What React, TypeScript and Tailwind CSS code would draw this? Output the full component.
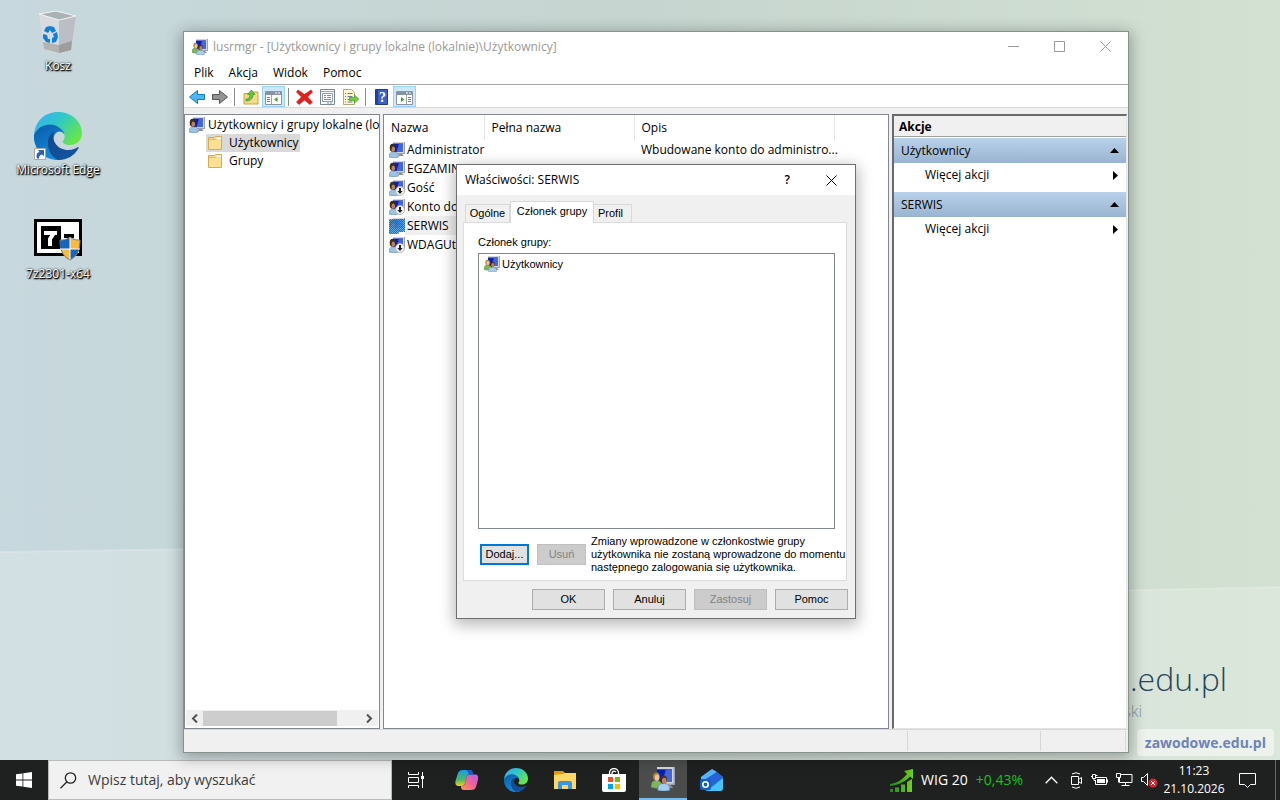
import type { ReactNode } from "react";

const toolbarSep = <span className="mr-1 ml-[3px] h-[18px] w-px bg-[#8d8d8d]" />;

const BlueScreen = () => (
  <>
    <path d="M4 0h12v12H4z" fill="#d3d6dc" />
    <path d="M15 0h1v12H4v-1h11z" fill="#9ba1ad" />
    <path d="M4 1.500h10V10H4z" fill="#0c1fae" />
    <path d="M10 1.500h4V10H7.500z" fill="#4467d6" />
    <path d="M10 12h3l2 2H9z" fill="#8b919b" />
  </>
);

const UserIcon = ({ disabled, selected }: { disabled?: boolean; selected?: boolean }) => (
  <svg width="16" height="16" viewBox="0 0 16 16" className="shrink-0">
    {selected && (
      <defs>
        <pattern id="dither" width="2" height="2" patternUnits="userSpaceOnUse">
          <path d="M0 0h1v1H0zM1 1h1v1H1z" fill="#0078d7" />
        </pattern>
      </defs>
    )}
    <BlueScreen />
    <path d="M0 15c0-4 1.500-5 4.500-5S9.500 11 9.500 15q-5 1.800-9.500 0z" fill="#9cc3e6" stroke="#5b7fa6" strokeWidth=".5" />
    <ellipse cx="3.600" cy="5.800" rx="2.900" ry="4" fill="#3d2c22" />
    <ellipse cx="4.300" cy="7.200" rx="1.800" ry="2.600" fill="#b98458" />
    {disabled && (
      <>
        <circle cx="11" cy="11" r="4.500" fill="#f4f4f4" stroke="#b3b3b3" />
        <path d="M10 8h2v3h1.700L11 14l-2.700-3H10z" fill="#222" />
      </>
    )}
    {selected && (
      <>
        <path d="M0 1h16v12H9.500v2.500H0z" fill="#4aa4ec" opacity=".7" />
        <path d="M0 1h16v13H9.500v2H0z" fill="url(#dither)" />
      </>
    )}
  </svg>
);

const GroupIcon = ({ size = 16 }: { size?: number }) => (
  <svg width={size} height={size} viewBox="0 0 16 16" className="shrink-0">
    <BlueScreen />
    <path d="M0 13.500c0-3.500 1.200-4.500 3.500-4.500S7.500 10 7.500 13.500q-4 1.400-7.500 0z" fill="#7db45e" stroke="#55863f" strokeWidth=".4" />
    <ellipse cx="3.600" cy="6.400" rx="2.200" ry="2.700" fill="#a98338" />
    <ellipse cx="4" cy="7.100" rx="1.500" ry="2.100" fill="#efc49a" />
    <path d="M4.500 15.500c0-3.500 1.500-4.500 4-4.500s4 1 4 4.500q-4 1.200-8 0z" fill="#a6cdf0" stroke="#6289b0" strokeWidth=".4" />
    <ellipse cx="8.400" cy="8.400" rx="2.200" ry="2.800" fill="#4b3022" />
    <ellipse cx="8.800" cy="9.200" rx="1.500" ry="2.100" fill="#b98458" />
  </svg>
);

const FolderIcon = () => (
  <svg width="16" height="16" viewBox="0 0 16 16" className="shrink-0">
    <path d="M1.500 2.500h6l1-1h6v13h-13z" fill="#f7d98a" stroke="#d8ab4c" />
    <path d="M9 2.500h5v1.500H9z" fill="#fff" />
    <path d="M2 4.500h12v9.500H2z" fill="#fbdf93" />
    <path d="M2 4.500h6.500l1-1" stroke="#e4bb55" fill="none" />
  </svg>
);

const ArrowIcon = ({ forward }: { forward?: boolean }) => (
  <svg width="16" height="16" viewBox="0 0 16 16">
    {forward ? (
      <path d="M.5 5.500h7v-4l8 6.500-8 6.500v-4h-7z" fill="#939393" stroke="#555" />
    ) : (
      <path d="M15.500 5.500h-7v-4L.5 8l8 6.500v-4h7z" fill="#49b8f0" stroke="#1778bd" />
    )}
  </svg>
);

const UpFolderIcon = () => (
  <svg width="16" height="16" viewBox="0 0 16 16">
    <path d="M1 4.500h6l1-1.500h7v12H1z" fill="#f7d98a" stroke="#cda343" />
    <path d="M3 10C6 10 7 8 7 5.500H4.500L8.500 1l3.500 4.500h-2C10 9 8 12 3 12z" fill="#63c83b" stroke="#3a8f24" strokeWidth=".7" />
  </svg>
);

const PaneIcon = ({ right }: { right?: boolean }) => (
  <svg width="17" height="16" viewBox="0 0 17 16">
    <path d="M.5 2.500h16v13H.5z" fill="#fdfdfd" stroke="#8b949f" />
    <path d="M1 3h15v3H1z" fill="#8593a5" />
    <path d="M10 4h2M13 4h2" stroke="#fff" />
    {right ? (
      <>
        <path d="M10.500 6v9" stroke="#9ba4af" />
        <path d="M12 8.500h3M12 10.500h3M12 12.500h3" stroke="#4787cc" />
        <path d="M5 8v5l3.500-2.500z" fill="#43a72d" />
      </>
    ) : (
      <>
        <path d="M6.500 6v9" stroke="#9ba4af" />
        <path d="M2 8.500h3M2 10.500h3M2 12.500h3" stroke="#4787cc" />
        <path d="M12.500 8v5L9 10.500z" fill="#43a72d" />
      </>
    )}
  </svg>
);

const DeleteIcon = () => (
  <svg width="17" height="16" viewBox="0 0 17 16">
    <path d="M2 1l6.500 4.500L15 1l1.500 2-5 5 5 5-2.500 2.500-5.500-4.500L3 15.500.5 13l5-5-5-5z" fill="#e3201b" stroke="#b3120f" strokeWidth=".6" />
  </svg>
);

const PropertiesIcon = () => (
  <svg width="16" height="16" viewBox="0 0 16 16">
    <path d="M.5.5h14v15H.5z" fill="#f5f8fb" stroke="#7d8894" />
    <path d="M1 2.500h13" stroke="#9fa9b5" />
    <path d="M2.500 4.500h10v8h-10z" fill="#fff" stroke="#8d9db3" />
    <path d="M4 6.500h2M4 8.500h2M7 6.500h4M7 8.500h4M4 10.500h7M7 14h2M10 14h2" stroke="#5e94c9" />
  </svg>
);

const ExportIcon = () => (
  <svg width="16" height="16" viewBox="0 0 16 16">
    <path d="M.5.5h8l3 3v12H.5z" fill="#fdf6d5" stroke="#b5a777" />
    <path d="M2 4.500h1M4.500 4.500h5M2 7.500h1M4.500 7.500h5M2 10.500h1M4.500 10.500h3M2 13h1M4.500 13h5" stroke="#6d7d97" />
    <path d="M6.500 8.500h5V6l4.300 4-4.300 4v-2.500h-5z" fill="#6fd23e" stroke="#3f9722" strokeWidth=".7" />
  </svg>
);

const HelpIcon = () => (
  <svg width="13" height="16" viewBox="0 0 13 16">
    <path d="M.5.5h12v15H.5z" fill="#3c5fc9" stroke="#24398c" />
    <path d="M1 1h2v14H1z" fill="#2541a0" />
    <text x="7.500" y="13" fontSize="14" fontWeight="bold" textAnchor="middle" fill="#fff" fontFamily="Liberation Serif">?</text>
  </svg>
);

const EdgeLogo = ({ size, id }: { size: number; id: string }) => (
  <svg width={size} height={size} viewBox="0 0 48 48">
    <defs>
      <linearGradient id={`${id}-top`} x1="0" y1="0" x2="1" y2=".6">
        <stop offset=".1" stopColor="#37b0f2" />
        <stop offset=".5" stopColor="#2fc8c8" />
        <stop offset="1" stopColor="#66e64a" />
      </linearGradient>
      <linearGradient id={`${id}-mid`} x1="0" y1="0" x2=".6" y2="1">
        <stop offset="0" stopColor="#0a5aa8" />
        <stop offset="1" stopColor="#1290e0" />
      </linearGradient>
      <linearGradient id={`${id}-low`} x1="0" y1="0" x2="1" y2="1">
        <stop offset="0" stopColor="#0d4a8c" />
        <stop offset="1" stopColor="#1554a4" />
      </linearGradient>
    </defs>
    <path d="M0 23C1 9 11 0 24 0c14 0 24 10 24 21 0 8-6 12-12 12-5 0-8-2-7-4 2-2 2-5 1-7C27 13 12 8 0 23z" fill={`url(#${id}-top)`} />
    <path d="M0 23C4 14 13 11 20 13c6 2 10 6 10 9-3-4-8-3-10 2-4 10 3 20 14 21-3 2-7 3-10 3C10 48-1 37 0 23z" fill={`url(#${id}-mid)`} />
    <path d="M14 28c1-4 3-7 6-8-3 9 4 18 14 18 5 0 8-2 10-3 1 0 1 1 0 2-4 7-11 11-20 11-7-3-11-12-10-20z" fill={`url(#${id}-low)`} />
  </svg>
);

const RecycleBin = () => (
  <svg width="40" height="44" viewBox="0 0 40 44">
    <path d="M1 4l20 6 17-4-5 34-12 3-15-4z" fill="#d8dcde" />
    <path d="M21 10l17-4-5 34-12 3z" fill="#b9bfc4" />
    <path d="M1 4L18 1l20 5-17 4z" fill="#a9b2b5" stroke="#f2f4f5" />
    <path d="M5 32l16 3v8L6 39z" fill="#b5b2b0" />
    <path d="M21 35l13-4-1 9-12 3z" fill="#9e9d9d" />
    <g fill="#0f80d8">
      <path d="M8 17l4-1 4 1 2 4-4 2-2-3-2 3-4-2zM5 24l4 1 1 4h2v4l-4-1-3-4zM19 22l1 5-2 5-4 1v-5l2-1-1-3z" />
    </g>
  </svg>
);

const SevenZip = () => (
  <svg width="48" height="42" viewBox="0 0 48 42">
    <path d="M0 0h48v37H0z" fill="#000" />
    <path d="M3 3h42v31H3z" fill="#fff" />
    <path d="M7 7h20v23H7z" fill="#000" />
    <path d="M10 14h13M20 14l-4 6v7" stroke="#fff" strokeWidth="4" fill="none" />
    <path d="M30 17h10" stroke="#000" strokeWidth="4" />
    <path d="M36 18c4 3 7 3 10 3 0 9-2 16-10 20-8-4-10-11-10-20 3 0 6 0 10-3z" fill="#f7b93e" stroke="#6d7a88" />
    <path d="M36 18.500V30H26.500q-.5-4-.5-8.500c4 0 7-1 10-3zM36 30h9q-2 7-9 10.500z" fill="#1565c0" />
    <path d="M36 18.500v22M26 30h20" stroke="#fff" />
  </svg>
);

const WindowsLogo = () => (
  <svg width="16" height="16" viewBox="0 0 16 16" fill="#fff">
    <path d="M0 2.300l6.500-.9v6.200H0zM7.300 1.300L16 0v7.600H7.300zM0 8.400h6.500v6.200L0 13.700zM7.300 8.400H16V16l-8.700-1.300z" />
  </svg>
);

const TaskViewIcon = () => (
  <svg width="18" height="16" viewBox="0 0 18 16" fill="none" stroke="#fff">
    <path d="M1.500 0v2.500h10V0M1.500 5.500h10v5h-10zM1.500 16v-2.500h10V16M15.500 0v16" />
    <path d="M14 4h3v3h-3z" fill="#fff" stroke="none" />
  </svg>
);

const CopilotIcon = () => (
  <svg width="24" height="24" viewBox="0 0 24 24">
    <defs>
      <linearGradient id="cop-a" x1="0" y1="0" x2="0" y2="1">
        <stop offset="0" stopColor="#189fe8" />
        <stop offset=".6" stopColor="#48b86a" />
        <stop offset="1" stopColor="#f2cf1f" />
      </linearGradient>
      <linearGradient id="cop-b" x1="1" y1="0" x2="0" y2="1">
        <stop offset="0" stopColor="#b45cf0" />
        <stop offset=".5" stopColor="#f0629a" />
        <stop offset="1" stopColor="#ff9a4a" />
      </linearGradient>
    </defs>
    <path d="M8 2h7c2 0 2.500 1.500 3 4l-4 .5c-1 0-2 1-2.500 3L10 15c-.7 2-1.500 3-3 3H4c-3 0-4-2-3.500-5L3 5c1-2 2-3 5-3z" fill="url(#cop-a)" />
    <path d="M16 22H9c-2 0-3-1-3-4h1c2 0 2.500-1 3-3l1.500-5.500c.5-2 1.500-3 3.500-3h5c3 0 3.500 2 3 5L21 19c-1 2-2 3-5 3z" fill="url(#cop-b)" />
    <path d="M11 2h4c2 0 2.500 1.500 3 4.500l-4 .5c-1-3-1.500-4.500-3-5z" fill="#2457d0" />
  </svg>
);

const ExplorerIcon = () => (
  <svg width="22" height="18" viewBox="0 0 22 18">
    <path d="M0 0h9l2 2h11v4H0z" fill="#e39b0b" />
    <path d="M0 4l9-1 2-1h11v16H0z" fill="#ffd767" />
    <path d="M4 18v-6q0-2 2-2h10q2 0 2 2v6h-4v-4H8v4z" fill="#3b96dd" />
  </svg>
);

const StoreIcon = () => (
  <svg width="24" height="24" viewBox="0 0 24 24">
    <path d="M7.500 7V5a4.500 4.500 0 019 0v2M10 7V5q1-3 4-1" fill="none" stroke="#fff" strokeWidth="1.300" />
    <path d="M0 6h24v16q0 2-2 2H2q-2 0-2-2z" fill="#fff" />
    <path d="M6 9h5v5H6z" fill="#f25022" />
    <path d="M13 9h5v5h-5z" fill="#7fba00" />
    <path d="M6 16h5v5H6z" fill="#00a4ef" />
    <path d="M13 16h5v5h-5z" fill="#ffb900" />
  </svg>
);

const OutlookIcon = () => (
  <svg width="24" height="24" viewBox="0 0 24 24">
    <path d="M1 9L12 1l11 8v11q0 3-3 3H6z" fill="#1c72d8" />
    <path d="M1 9L12 1l5 3L1 14z" fill="#58b4f5" />
    <path d="M3 13L17 4l6 5L8 20z" fill="#2464d6" />
    <path d="M8 22L23 10v10q0 3-3 3H6z" fill="#45c3fb" />
    <rect x="0" y="11" width="11" height="11" rx="2" fill="#1160c4" />
    <circle cx="5.500" cy="16.500" r="2.700" fill="none" stroke="#fff" strokeWidth="1.600" />
  </svg>
);

const TrendIcon = () => (
  <svg width="23" height="23" viewBox="0 0 23 23">
    <defs>
      <linearGradient id="trend" x1="0" y1="0" x2="1" y2="0">
        <stop offset="0" stopColor="#1c8a17" />
        <stop offset="1" stopColor="#72d116" />
      </linearGradient>
    </defs>
    <path d="M0 15C8 14 13 10 17 5l-3-3 9-2v10l-3-2.500C16 12 9 16 0 17z" fill="url(#trend)" />
    <path d="M0 20h3v3H0zM5 18.500h4V23H5zM11 15.500h4V23h-4zM17 13l5-3v13h-5z" fill="url(#trend)" />
  </svg>
);

const tree = [
  { name: "Użytkownicy", selected: true },
  { name: "Grupy", selected: false },
];

const users = [
  { name: "Administrator", description: "Wbudowane konto do administro..." },
  { name: "EGZAMIN" },
  { name: "Gość", disabled: true },
  { name: "Konto do", disabled: true },
  { name: "SERWIS", selected: true },
  { name: "WDAGUti", disabled: true },
];

const DesktopItem = ({ label, children }: { label: string; children: ReactNode }) => (
  <button className="flex w-[116px] flex-col items-center text-xs leading-4 text-white">
    <span className="flex h-[52px] items-center">{children}</span>
    <span className="[text-shadow:1px_1px_2px_#000,0_0_2px_#000,1px_1px_1px_#000]">{label}</span>
  </button>
);

const ToolButton = ({ label, active, children }: { label: string; active?: boolean; children: ReactNode }) => (
  <button
    aria-label={label}
    className={`flex h-[21px] w-[23px] items-center justify-center ${
      active ? "border border-[#99d1ff] bg-[#cce8ff]" : ""
    }`}
  >
    {children}
  </button>
);

const ActionGroup = ({ title }: { title: string }) => (
  <section>
    <button className="flex h-[25px] w-full items-center justify-between bg-linear-to-b from-[#b9d1ea] to-[#99b4d1] pr-[7px] pl-[7px]">
      {title}
      <svg width="9" height="5" viewBox="0 0 9 5">
        <path d="M0 5l4.500-5L9 5z" />
      </svg>
    </button>
    <button className="mb-[5px] flex h-6 w-full items-center justify-between pr-2 pl-[31px]">
      Więcej akcji
      <svg width="5" height="9" viewBox="0 0 5 9">
        <path d="M0 0l5 4.500L0 9z" />
      </svg>
    </button>
  </section>
);

const DialogButton = ({ children, disabled }: { children: ReactNode; disabled?: boolean }) => (
  <button
    disabled={disabled}
    className="h-[21px] w-[73px] border border-[#adadad] bg-[#e1e1e1] disabled:border-[#bfbfbf] disabled:bg-[#cccccc] disabled:text-[#838383]"
  >
    {children}
  </button>
);

const PropertiesDialog = () => (
  <div
    role="dialog"
    aria-label="Właściwości: SERWIS"
    className="absolute top-[164px] left-[456px] w-[400px] border border-[#6e6e6e] bg-[#f0f0f0] pb-2 text-[11px] leading-[13px] shadow-[0_4px_14px_2px_rgba(0,0,0,0.28)] [font-family:'Liberation_Sans',Arial,sans-serif]"
  >
    <header className="flex h-[30px] items-center bg-white pr-[18px] pl-2 text-xs [font-family:'Open_Sans','Noto_Sans',sans-serif]">
      <h2 className="flex-1">Właściwości: SERWIS</h2>
      <button aria-label="Pomoc kontekstowa" className="mr-9 font-semibold">?</button>
      <button aria-label="Zamknij">
        <svg width="11" height="11" viewBox="0 0 11 11" stroke="#000">
          <path d="M.5.5l10 10M10.500.5l-10 10" />
        </svg>
      </button>
    </header>

    <div className="px-2 pt-[6px]">
      <div role="tablist" className="flex items-end">
        <button role="tab" className="h-[18px] w-[45px] border border-b-0 border-[#d9d9d9]">Ogólne</button>
        <button role="tab" aria-selected="true" className="relative -mb-px h-[22px] w-[84px] border border-b-0 border-[#d9d9d9] bg-white pb-0.5">
          Członek grupy
        </button>
        <button role="tab" className="h-[18px] w-[38px] border border-b-0 border-l-0 border-[#d9d9d9] pr-1">Profil</button>
      </div>
      <div className="-ml-0.5 border border-[#dcdcdc] bg-white pt-[13px] pb-1.5 pl-[14px]">
        <h3 id="member-of" className="mb-[4px]">Członek grupy:</h3>
        <ul aria-labelledby="member-of" className="mr-[11px] h-[276px] border border-[#828790] p-[2px]">
          <li className="flex items-center gap-0.5 pl-[3px]">
            <GroupIcon />
            Użytkownicy
          </li>
        </ul>
        <div className="mt-[6px] flex items-center pl-[2px]">
          <button className="h-[21px] w-[49px] shrink-0 border-2 border-[#0078d7] bg-[#e1e1e1]">Dodaj...</button>
          <button disabled className="ml-2 h-[21px] w-[49px] shrink-0 border border-[#bfbfbf] bg-[#cccccc] text-[#838383]">Usuń</button>
          <p className="ml-[5px] flex-1 whitespace-nowrap">
            Zmiany wprowadzone w członkostwie grupy
            <br />
            użytkownika nie zostaną wprowadzone do momentu
            <br />
            następnego zalogowania się użytkownika.
          </p>
        </div>
      </div>
    </div>
    <footer className="mt-2 flex justify-end gap-2 pr-[7px]">
      <DialogButton>OK</DialogButton>
      <DialogButton>Anuluj</DialogButton>
      <DialogButton disabled>Zastosuj</DialogButton>
      <DialogButton>Pomoc</DialogButton>
    </footer>
  </div>
);

const ManagerWindow = () => (
  <main className="absolute top-[31px] right-[151px] bottom-[7px] left-[183px] flex flex-col border border-[#87928f] bg-[#f0f0f0] shadow-[0_3px_14px_2px_rgba(0,0,0,0.3)]">
    <header className="flex h-[29px] items-center gap-[5px] bg-white pr-[17px] pl-2 text-[#999]">
      <GroupIcon />
      <h1 className="flex-1">lusrmgr - [Użytkownicy i grupy lokalne (lokalnie)\Użytkownicy]</h1>
      <div className="flex items-center gap-[35px]">
        <button aria-label="Minimalizuj">
          <svg width="11" height="11" viewBox="0 0 11 11" stroke="#999"><path d="M0 5.500h11" /></svg>
        </button>
        <button aria-label="Maksymalizuj">
          <svg width="11" height="11" viewBox="0 0 11 11" stroke="#999" fill="none"><path d="M.5.5h10v10H.5z" /></svg>
        </button>
        <button aria-label="Zamknij okno">
          <svg width="11" height="11" viewBox="0 0 11 11" stroke="#999"><path d="M.5.5l10 10M10.500.5l-10 10" /></svg>
        </button>
      </div>
    </header>

    <nav className="flex h-[24px] items-start gap-[15px] border-b border-[#a8a8a8] bg-white pt-1 pl-[10px]">
      <button>Plik</button>
      <button>Akcja</button>
      <button>Widok</button>
      <button>Pomoc</button>
    </nav>

    <div className="flex h-[23px] shrink-0 items-center border-b border-[#d7d7d7] bg-white pt-px pl-px">
      <ToolButton label="Wstecz"><ArrowIcon /></ToolButton>
      <ToolButton label="Dalej"><ArrowIcon forward /></ToolButton>
      {toolbarSep}
      <ToolButton label="W górę"><UpFolderIcon /></ToolButton>
      <ToolButton label="Drzewo konsoli" active><PaneIcon /></ToolButton>
      {toolbarSep}
      <ToolButton label="Usuń konto"><DeleteIcon /></ToolButton>
      <ToolButton label="Właściwości"><PropertiesIcon /></ToolButton>
      <ToolButton label="Eksportuj listę"><ExportIcon /></ToolButton>
      {toolbarSep}
      <ToolButton label="Temat pomocy"><HelpIcon /></ToolButton>
      <ToolButton label="Okienko akcji" active><PaneIcon right /></ToolButton>
    </div>

    <div className="flex min-h-0 flex-1 pt-[6px]">
      <aside className="flex w-[196px] shrink-0 flex-col overflow-hidden border border-[#828790] bg-white">
        <ul className="flex-1 pt-px leading-[18px] whitespace-nowrap">
          <li className="flex items-center gap-[3px] pl-1">
            <UserIcon />
            <span className="min-w-0 flex-1 overflow-hidden">Użytkownicy i grupy lokalne (lok</span>
          </li>
          {tree.map((item) => (
            <li key={item.name} className="flex pl-[21px]">
              <span className={`flex items-center gap-[6px] pr-px pl-px ${item.selected ? "bg-[#d9d9d9]" : ""}`}>
                <FolderIcon />
                {item.name}
              </span>
            </li>
          ))}
        </ul>
        <div className="m-px mb-[2px] flex h-4 items-center bg-[#f0f0f0] px-[5px]">
          <svg width="7" height="9" viewBox="0 0 7 9" fill="none" stroke="#505050" strokeWidth="2"><path d="M6 .5l-4 4 4 4" /></svg>
          <span className="ml-[5px] h-[15px] w-[134px] bg-[#cdcdcd]" />
          <svg width="7" height="9" viewBox="0 0 7 9" fill="none" stroke="#505050" strokeWidth="2" className="ml-auto"><path d="M1 .5l4 4-4 4" /></svg>
        </div>
      </aside>

      <section className="ml-[3px] flex-1 overflow-hidden border border-[#828790] bg-white">
        <table className="w-full table-fixed text-left">
          <thead>
            <tr className="h-[25px]">
              <th className="w-[100px] border-r border-[#e5e5e5] pl-[7px] font-normal">Nazwa</th>
              <th className="w-[150px] border-r border-[#e5e5e5] pl-[7px] font-normal">Pełna nazwa</th>
              <th className="w-[200px] border-r border-[#e5e5e5] pl-[7px] font-normal">Opis</th>
              <td />
            </tr>
          </thead>
          <tbody>
            {users.map((user) => (
              <tr key={user.name} className="h-[19px]">
                <td>
                  <div className="flex items-center pl-[5px] whitespace-nowrap">
                    <UserIcon disabled={user.disabled} selected={user.selected} />
                    <span className={`h-[19px] flex-1 pl-[2px] leading-[19px] ${user.selected ? "bg-[#f0f0f0]" : ""}`}>
                      {user.name}
                    </span>
                  </div>
                </td>
                <td />
                <td className="pl-[7px] whitespace-nowrap">{user.description}</td>
                <td />
              </tr>
            ))}
          </tbody>
        </table>
      </section>

      <aside className="mr-px ml-[3px] w-[235px] shrink-0 border-t-2 border-r border-b border-l-2 border-t-[#696969] border-r-[#e3e3e3] border-b-[#e3e3e3] border-l-[#696969] bg-white">
        <h2 className="mb-px h-[21px] border-b border-[#a0a0a0] bg-[#f0f0f0] pl-[5px] leading-[21px] font-bold">Akcje</h2>
        <ActionGroup title="Użytkownicy" />
        <ActionGroup title="SERWIS" />
      </aside>
    </div>

    <footer className="flex h-[23px] shrink-0 justify-end border-t border-[#d7d7d7] py-px pr-[2px]">
      <span className="w-[133px] border-l border-[#d7d7d7]" />
      <span className="w-[86px] border-x border-[#d7d7d7]" />
    </footer>
  </main>
);

const TaskButton = ({ label, active, children }: { label: string; active?: boolean; children: ReactNode }) => (
  <button
    aria-label={label}
    className={`flex h-10 w-12 items-center justify-center ${active ? "border-b-2 border-[#76b9ed] bg-[#4b4c4c]" : ""}`}
  >
    {children}
  </button>
);

const Taskbar = () => (
  <footer className="flex h-10 shrink-0 items-center bg-[#1f2121] text-white">
    <TaskButton label="Start"><WindowsLogo /></TaskButton>
    <label className="flex h-10 w-[344px] items-center gap-[11px] border border-[#b9b9b9] bg-[#f1f1f1] pl-[11px] text-[#2b2b2b]">
      <svg width="17" height="17" viewBox="0 0 17 17" fill="none" stroke="#222" strokeWidth="1.300">
        <circle cx="10.500" cy="6" r="5.200" />
        <path d="M7 9.700L.5 16.300" />
      </svg>
      <input aria-label="Wyszukaj" placeholder="Wpisz tutaj, aby wyszukać" className="flex-1 text-sm outline-none placeholder:text-[#3a3a3a]" />
    </label>
    <div className="mr-[3px]">
      <TaskButton label="Widok zadań"><TaskViewIcon /></TaskButton>
    </div>
    <div className="flex gap-px">
      <TaskButton label="Copilot"><CopilotIcon /></TaskButton>
      <TaskButton label="Microsoft Edge"><EdgeLogo size={24} id="edge-bar" /></TaskButton>
      <TaskButton label="Eksplorator plików"><ExplorerIcon /></TaskButton>
      <TaskButton label="Microsoft Store"><StoreIcon /></TaskButton>
      <TaskButton label="lusrmgr" active><GroupIcon size={24} /></TaskButton>
      <TaskButton label="Outlook"><OutlookIcon /></TaskButton>
    </div>

    <div className="ml-auto flex h-10 items-center">
      <button className="mr-[22px] flex items-center text-sm">
        <TrendIcon />
        <span className="mr-2 ml-2 whitespace-nowrap">WIG 20</span>
        <span className="whitespace-nowrap text-[#13c413]">+0,43%</span>
      </button>
      <div className="flex items-center gap-2">
        <button aria-label="Pokaż ukryte ikony" className="mr-1">
          <svg width="13" height="8" viewBox="0 0 13 8" fill="none" stroke="#fff" strokeWidth="1.300"><path d="M.7 7.300l5.800-6 5.800 6" /></svg>
        </button>
        <button aria-label="Kamera">
          <svg width="13" height="17" viewBox="0 0 13 17" fill="none" stroke="#fff">
            <path d="M1.500 4.500h7v8h-7zM8.500 7.500l3-2v6l-3-2M2 2q4-2.500 8 0M2 15q4 2.500 8 0" />
          </svg>
        </button>
        <button aria-label="Bateria">
          <svg width="17" height="16" viewBox="0 0 17 16" fill="none" stroke="#fff">
            <path d="M6 5.500h9.500v7H4.500V9M16.500 7.500v3M0 4.500h1.500M1.500 2.500h3v4h-3zM4.500 3.500h2M4.500 5.500h2M3 6.500v2h2" />
            <path d="M6 7h8v4H6z" fill="#fff" stroke="none" />
          </svg>
        </button>
        <button aria-label="Sieć">
          <svg width="17" height="16" viewBox="0 0 17 16" fill="none" stroke="#fff">
            <path d="M5 2.500h11v8H3.500V6M9.500 10.500v3M5.500 13.500h8M.5 1.500h4v4h-4zM2.500 5.500v5" />
          </svg>
        </button>
        <button aria-label="Głośność: wyciszony">
          <svg width="17" height="16" viewBox="0 0 17 16" fill="none" stroke="#fff">
            <path d="M.5 5.500h2l4-4v12l-4-4h-2z" />
            <circle cx="12" cy="11" r="4.500" fill="#dc2331" stroke="none" />
            <path d="M10 9l4 4M14 9l-4 4" />
          </svg>
        </button>
      </div>
      <time className="ml-[5px] w-[62px] text-center text-xs leading-[18px] whitespace-nowrap">
        11:23
        <br />
        21.10.2026
      </time>
      <button aria-label="Powiadomienia" className="mr-4 ml-[14px]">
        <svg width="17" height="17" viewBox="0 0 17 17" fill="none" stroke="#fff">
          <path d="M.5 1.500h16v11h-5l-3 3-3-3h-5z" />
        </svg>
      </button>
      <span className="mr-1 ml-[3px] h-10 w-px bg-[#6a6a6a]" />
    </div>
  </footer>
);

export default function App() {
  return (
    <div className="flex h-screen flex-col overflow-hidden text-xs leading-4 text-black [font-family:'Open_Sans','Noto_Sans',sans-serif]">
      <div className="relative flex-1 bg-linear-to-r from-[#c7d8de] via-[#c6d5cf] to-[#d3e1d2]">
        <svg className="absolute inset-0 h-full w-full" viewBox="0 0 1280 760" preserveAspectRatio="none">
          <path d="M0 552L200 549 1100 591 1280 587V760H0z" fill="#fff" opacity=".2" />
          <path d="M0 552L200 549 1100 591 1280 587" fill="none" stroke="#fff" strokeWidth="2" opacity=".2" />
        </svg>
        <div className="absolute top-[6px] flex flex-col">
          <div className="h-[104px]"><DesktopItem label="Kosz"><RecycleBin /></DesktopItem></div>
          <div className="h-[104px]">
            <DesktopItem label="Microsoft Edge">
              <span className="relative">
                <EdgeLogo size={48} id="edge-desk" />
                <svg width="12" height="12" viewBox="0 0 12 12" className="absolute bottom-0 left-0">
                  <path d="M.5.5h11v11H.5z" fill="#fff" stroke="#aaa" />
                  <path d="M3 10.500q-1-3 0-5 1-1.500 2.500-1.500L4 2h6v6L8 6.500Q5 7 5 10.500z" fill="#2f62a8" />
                </svg>
              </span>
            </DesktopItem>
          </div>
          <DesktopItem label="7z2301-x64"><SevenZip /></DesktopItem>
        </div>
        <div className="absolute right-[53px] bottom-[39px] text-right whitespace-nowrap">
          <p className="text-[32px] leading-[44px] font-light text-[#26465a]">.edu.pl</p>
          <p className="mr-[85px] text-base leading-5 font-light text-[#8798a0]">ski</p>
        </div>
        <p className="absolute right-[6px] bottom-[4px] rounded bg-[#edf2ec] px-2 text-sm leading-[27px] font-bold text-[#6e83ba]">zawodowe.edu.pl</p>
        <ManagerWindow />
        <PropertiesDialog />
      </div>
      <Taskbar />
    </div>
  );
}
